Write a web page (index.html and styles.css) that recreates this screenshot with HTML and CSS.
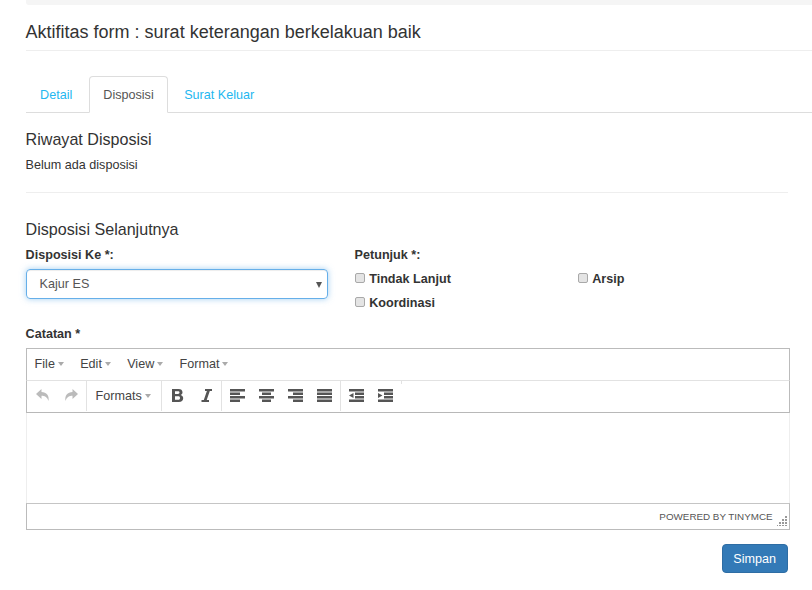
FILE: index.html
```html
<!DOCTYPE html>
<html lang="en">
  <head>
    <meta charset="UTF-8" />
    <title>Aktifitas form</title>
    <link rel="stylesheet" href="styles.css">
  </head>
  <body>
    <div class="topbar"></div>
    <h1 class="page-title">Aktifitas form : surat keterangan berkelakuan baik</h1>

    <ul class="tabs">
      <li class="tab">Detail</li>
      <li class="tab active">Disposisi</li>
      <li class="tab">Surat Keluar</li>
    </ul>

    <div class="content">
      <h4 class="section-first">Riwayat Disposisi</h4>
      <p class="note">Belum ada disposisi</p>
      <hr />
      <h4 class="section-next">Disposisi Selanjutnya</h4>

      <div class="form-row">
        <div class="col-tujuan">
          <label class="field-label">Disposisi Ke *:</label>
          <div class="select-box">
            <span>Kajur ES</span>
            <i class="select-arrow"></i>
          </div>
        </div>
        <div class="col-petunjuk">
          <label class="field-label">Petunjuk *:</label>
          <div class="checks">
            <label class="check"><input type="checkbox" />Tindak Lanjut</label>
            <label class="check"><input type="checkbox" />Arsip</label>
            <label class="check"><input type="checkbox" />Koordinasi</label>
          </div>
        </div>
      </div>

      <label class="field-label catatan">Catatan *</label>
      <div class="editor">
        <div class="menubar">
          <span class="menu">File<i class="caret"></i></span>
          <span class="menu">Edit<i class="caret"></i></span>
          <span class="menu">View<i class="caret"></i></span>
          <span class="menu">Format<i class="caret"></i></span>
        </div>
        <div class="toolbar">
          <div class="tool-group history">
            <svg class="icon" viewBox="0 0 16 16"><path d="M6.5 1 1 6l5.500 5V7.800c3 0 5.500 1 7 5.200C14.500 7.500 11.500 4.300 6.500 4z"/></svg>
            <svg class="icon" viewBox="0 0 16 16"><path d="M8.500 1 14 6l-5.500 5V7.800c-3 0-5.500 1-7 5.200C.5 7.500 3.500 4.300 8.500 4z"/></svg>
          </div>
          <div class="tool-group">
            <span class="menu formats">Formats<i class="caret"></i></span>
          </div>
          <div class="tool-group">
            <svg class="icon" viewBox="0 0 16 16"><path fill-rule="evenodd" d="M2 1h6.500c2.500 0 4 1.200 4 3.300 0 1.300-.7 2.200-1.800 2.700 1.500.4 2.500 1.600 2.500 3.200 0 2.400-1.700 3.800-4.300 3.800H2zM5 3.300v2.600h3c.9 0 1.500-.5 1.500-1.300S8.900 3.300 8 3.300zM5 8.200v3.500h3.300c1.100 0 1.700-.6 1.700-1.750S9.400 8.200 8.300 8.200z"/></svg>
            <svg class="icon" viewBox="0 0 16 16"><path d="M6 1h7v2h-2.200L7.700 12H10v2H2.500v-2h2.300L7.900 3H6z"/></svg>
          </div>
          <div class="tool-group aligns">
            <svg class="icon" viewBox="0 0 16 16"><path d="M0 1h15v2.500H0zM0 4.500h10V7H0zM0 8h15v2.500H0zM0 11.500h10V14H0z"/></svg>
            <svg class="icon" viewBox="0 0 16 16"><path d="M0 1h15v2.500H0zM3 4.500h9V7H3zM0 8h15v2.500H0zM3 11.500h9V14H3z"/></svg>
            <svg class="icon" viewBox="0 0 16 16"><path d="M0 1h15v2.500H0zM5 4.500h10V7H5zM0 8h15v2.500H0zM5 11.500h10V14H5z"/></svg>
            <svg class="icon" viewBox="0 0 16 16"><path d="M0 1h15v2.500H0zM0 4.500h15V7H0zM0 8h15v2.500H0zM0 11.500h15V14H0z"/></svg>
          </div>
          <div class="tool-group last">
            <svg class="icon" viewBox="0 0 16 16"><path d="M0 1h15v2.500H0zM6 4.500h9V7H6zM6 8h9v2.500H6zM0 11.500h15V14H0zM4.500 5v5L0 7.500z"/></svg>
            <svg class="icon" viewBox="0 0 16 16"><path d="M0 1h15v2.500H0zM6 4.500h9V7H6zM6 8h9v2.500H6zM0 11.500h15V14H0zM0 5v5l4.500-2.500z"/></svg>
          </div>
        </div>
        <div class="edit-area"></div>
        <div class="statusbar">
          <span class="powered">POWERED BY TINYMCE</span>
          <svg class="resize" viewBox="0 0 10 10"><path d="M8 0h2v2H8zM5 3h2v2H5zM8 3h2v2H8zM2 6h2v2H2zM5 6h2v2H5zM8 6h2v2H8zM0 9h1v1H0zM2 9h2v1H2zM5 9h2v1H5zM8 9h2v1H8z"/></svg>
        </div>
      </div>

      <div class="actions">
        <button class="btn-save">Simpan</button>
      </div>
    </div>
  </body>
</html>
```

FILE: styles.css
```css
* {
  box-sizing: border-box;
}
body {
  margin: 0;
  padding: 0 0 0 25.6px;
  height: 590px;
  overflow: hidden;
  font-family: "Liberation Sans", Arial, sans-serif;
  font-size: 12.6px;
  line-height: 18px;
  color: #333;
  background-color: #fff;
}
.topbar {
  height: 5px;
  background-color: #f5f5f5;
  border-bottom-left-radius: 3px;
}
.page-title {
  margin: 0;
  padding: 16px 0 8px;
  height: 46px;
  font-size: 18px;
  line-height: 22px;
  font-weight: 400;
  border-bottom: 1px solid #eee;
}
.tabs {
  display: flex;
  margin: 25px 0 0;
  padding: 0;
  height: 37px;
  list-style: none;
  border-bottom: 1px solid #ddd;
}
.tab {
  height: 37px;
  padding: 9px 13.5px;
  margin-right: 2px;
  color: #23b7f0;
  border: 1px solid transparent;
}
.tab.active {
  padding-right: 13px;
  color: #555;
  background-color: #fff;
  border-color: #ddd #ddd #fff;
  border-radius: 4px 4px 0 0;
}
.content {
  width: 762px;
}
h4 {
  margin: 0;
  font-size: 16.1px;
  line-height: 20px;
  font-weight: 400;
}
.section-first {
  margin-top: 16px;
}
.note {
  margin: 7px 0 0;
}
hr {
  margin: 18px 0 0;
  border: 0;
  border-top: 1px solid #eee;
}
.section-next {
  margin-top: 26px;
}
.form-row {
  display: flex;
  margin-top: 7px;
}
.col-tujuan {
  width: 329px;
}
.field-label {
  display: block;
  font-weight: 700;
}
.select-box {
  display: flex;
  justify-content: space-between;
  align-items: center;
  width: 302px;
  height: 30px;
  margin-top: 5px;
  padding: 0 5px 0 13px;
  color: #555;
  border: 1px solid #66afe9;
  border-radius: 4px;
  box-shadow: inset 0 1px 1px rgba(0, 0, 0, 0.075), 0 0 6px rgba(102, 175, 233, 0.6);
}
.select-arrow {
  margin-top: 1px;
  border-top: 6px solid #555;
  border-left: 3px solid transparent;
  border-right: 3px solid transparent;
}
.col-petunjuk {
  flex: 1;
}
.checks {
  display: grid;
  grid-template-columns: 223px 1fr;
  row-gap: 6px;
  margin-top: 6px;
}
.check {
  display: flex;
  align-items: center;
  font-weight: 700;
}
.check input {
  appearance: none;
  width: 10px;
  height: 10px;
  margin: 0 4.6px 3px 0;
  background-color: #e4e4e4;
  border: 1px solid #a9a9a9;
  border-radius: 2px;
}
.catatan {
  margin-top: 13px;
}
.editor {
  width: 764px;
  height: 182px;
  margin-top: 5px;
  display: flex;
  flex-direction: column;
}
.menubar {
  display: flex;
  align-items: center;
  gap: 16.3px;
  height: 33px;
  padding: 0 8px 2px;
  border: 1px solid #bbb;
  border-bottom: 1px solid #e2e2e2;
}
.menu {
  color: #444;
}
.caret {
  display: inline-block;
  margin-left: 3px;
  vertical-align: 2px;
  border-top: 4px solid #aaa;
  border-left: 3.5px solid transparent;
  border-right: 3.5px solid transparent;
}
.toolbar {
  display: flex;
  height: 32px;
  border-left: 1px solid #bbb;
  border-right: 1px solid #bbb;
  border-bottom: 1px solid #b8b8b8;
}
.tool-group {
  display: flex;
  align-items: center;
  gap: 13px;
  height: 30px;
  padding: 0 6px 0 8px;
  border-right: 1px solid #e2e2e2;
}
.tool-group.aligns {
  padding-right: 7px;
}
.tool-group.last {
  position: relative;
  padding-right: 7px;
  border-right: 0;
}
.tool-group.last::after {
  content: "";
  position: absolute;
  top: 0;
  right: -1px;
  width: 1px;
  height: 3px;
  background-color: #e2e2e2;
}
.icon {
  width: 16px;
  height: 16px;
  fill: #555;
}
.history .icon {
  fill: #bbb;
}
.formats {
  margin: 0 4px 0 1px;
}
.edit-area {
  flex: 1;
  border-left: 1px solid #eee;
  border-right: 1px solid #eee;
}
.statusbar {
  position: relative;
  display: flex;
  justify-content: flex-end;
  align-items: center;
  height: 27px;
  padding-right: 16px;
  border: 1px solid #bbb;
  border-top-color: #c5c5c5;
}
.powered {
  font-size: 9.84px;
  color: #555;
}
.resize {
  position: absolute;
  right: 2px;
  bottom: 3px;
  width: 10px;
  height: 10px;
  fill: #999;
}
.actions {
  display: flex;
  justify-content: flex-end;
  margin-top: 14px;
}
.btn-save {
  width: 66px;
  height: 29px;
  padding: 0;
  font-family: inherit;
  font-size: 12.6px;
  color: #fff;
  background-color: #337ab7;
  border: 1px solid #2e6da4;
  border-radius: 4px;
}
```
